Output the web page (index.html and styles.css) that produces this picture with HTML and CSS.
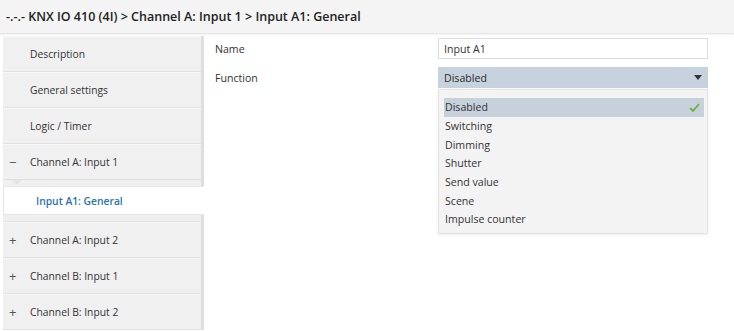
FILE: index.html
```html
<!DOCTYPE html>
<html lang="en">
<head>
    <meta charset="UTF-8">
    <title>KNX IO 410 - Input A1: General</title>
    <link rel="stylesheet" href="styles.css">
</head>
<body>
    <div class="title-bar">-.-.- KNX IO 410 (4I) &gt; Channel A: Input 1 &gt; Input A1: General</div>

    <div class="main">
        <ul class="nav">
            <li class="nav-item"><span class="sign"></span>Description</li>
            <li class="nav-item"><span class="sign"></span>General settings</li>
            <li class="nav-item"><span class="sign"></span>Logic / Timer</li>
            <li class="nav-item"><span class="sign">&minus;</span>Channel A: Input 1</li>
            <li class="nav-children">
                <div class="nav-child active">Input A1: General</div>
            </li>
            <li class="nav-item"><span class="sign">+</span>Channel A: Input 2</li>
            <li class="nav-item"><span class="sign">+</span>Channel B: Input 1</li>
            <li class="nav-item"><span class="sign">+</span>Channel B: Input 2</li>
        </ul>

        <div class="content">
            <div class="param-row">
                <label class="param-label">Name</label>
                <div class="text-field">Input A1</div>
            </div>
            <div class="param-row">
                <label class="param-label">Function</label>
                <div class="select-wrap">
                    <div class="select">
                        <span>Disabled</span>
                        <svg class="caret" width="8" height="5" viewBox="0 0 8 5"><path d="M0 0h8L4 5z" fill="#333"/></svg>
                    </div>
                    <ul class="dropdown">
                        <li class="option selected">Disabled
                            <svg class="check" width="11" height="9" viewBox="0 0 11 9"><path d="M1 5l3 3 6-7" fill="none" stroke="#6fae45" stroke-width="1.8"/></svg>
                        </li>
                        <li class="option">Switching</li>
                        <li class="option">Dimming</li>
                        <li class="option">Shutter</li>
                        <li class="option">Send value</li>
                        <li class="option">Scene</li>
                        <li class="option">Impulse counter</li>
                    </ul>
                </div>
            </div>
        </div>
    </div>
</body>
</html>
```

FILE: styles.css
```css
* {
    box-sizing: border-box;
    margin: 0;
    padding: 0;
}

body {
    font-family: "Open Sans", "Noto Sans", sans-serif;
    font-size: 10.6px;
    color: #333;
    background: #fff;
    width: 734px;
    height: 331px;
    overflow: hidden;
}

.title-bar {
    height: 34px;
    padding: 0 6px;
    display: flex;
    align-items: center;
    background: #f4f4f4;
    border-bottom: 1px solid #e6e6e6;
    box-shadow: 0 1px 2px rgba(0, 0, 0, 0.06);
    font-size: 12.5px;
    font-weight: 600;
    color: #222;
}

.main {
    display: flex;
}

/* tree on the left */
.nav {
    list-style: none;
    width: 201px;
    margin: 2px 0 0 3px;
    background: #f0f0f0;
    border-right: 3px solid #dedede;
    font-size: 10.3px;
}

.nav-item {
    height: 36px;
    display: flex;
    align-items: center;
    border-bottom: 1px solid #e0e0e0;
    border-top: 1px solid #f8f8f8;
}

.sign {
    width: 27px;
    padding-left: 6px;
    font-size: 13px;
    color: #555;
}

.nav-children {
    position: relative;
    padding: 6px 0;
    border-bottom: 1px solid #e0e0e0;
}

.nav-children::before {
    content: "";
    position: absolute;
    top: 0;
    left: 9px;
    border: 5px solid transparent;
    border-top-color: #e4e4e4;
}

.nav-child {
    height: 29px;
    display: flex;
    align-items: center;
    padding-left: 32px;
}

.nav-child.active {
    background: #fff;
    margin-right: -3px;
    border: 1px solid #e6e6e6;
    border-right: none;
    color: #2b73ad;
    font-weight: 600;
}

/* parameter pane */
.content {
    flex: 1;
    padding: 0 26px 0 11px;
}

.param-row {
    display: flex;
    height: 29px;
    align-items: center;
}

.param-label {
    width: 223px;
}

.text-field {
    width: 270px;
    height: 21px;
    padding: 0 5px;
    display: flex;
    align-items: center;
    border: 1px solid #dcdcdc;
    background: #fff;
}

.select-wrap {
    position: relative;
    width: 270px;
}

.select {
    height: 21px;
    padding: 0 6px;
    display: flex;
    align-items: center;
    justify-content: space-between;
    background: #c6d2dd;
    color: #2a2a2a;
}

.dropdown {
    list-style: none;
    position: absolute;
    top: 22px;
    left: 0;
    width: 270px;
    padding: 8px 3px 4px 5px;
    background: #f3f3f3;
    border: 1px solid #e4e4e4;
    box-shadow: 0 1px 3px rgba(0, 0, 0, 0.08);
}

.option {
    height: 18.7px;
    display: flex;
    align-items: center;
    justify-content: space-between;
    padding: 0 4px 0 1px;
    color: #333;
}

.option.selected {
    background: #c6d1dc;
}
```
